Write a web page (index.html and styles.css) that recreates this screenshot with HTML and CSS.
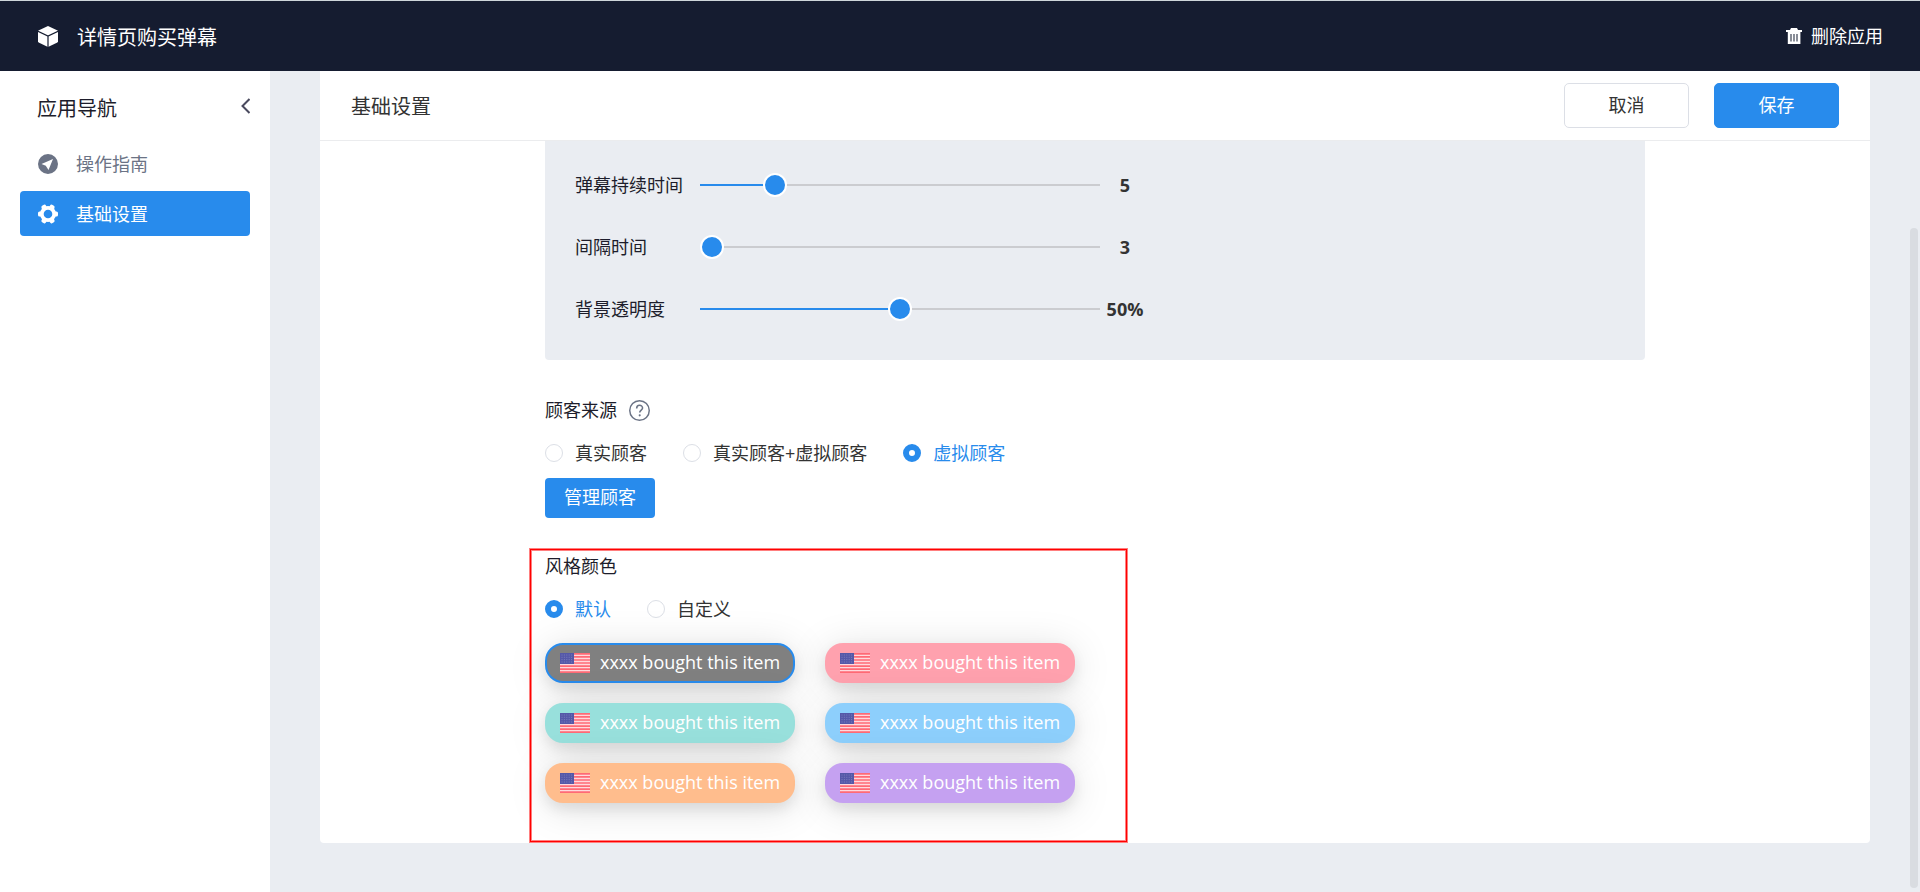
FILE: index.html
```html
<!DOCTYPE html>
<html lang="zh-CN">
<head>
<meta charset="utf-8">
<title>详情页购买弹幕</title>
<link rel="stylesheet" href="styles.css">
</head>
<body>
<svg class="sprite" aria-hidden="true">
  <symbol id="flag" viewBox="0 0 30 20">
    <rect width="30" height="20" fill="#ffd9dd"/>
    <path d="M0 .8h30M0 3.9h30M0 7h30M0 10h30M0 13.1h30M0 16.2h30M0 19.2h30" stroke="#ff6a75" stroke-width="1.7"/>
    <rect width="14" height="11" fill="#5558a8"/>
    <path d="M1.500 2h11M1.500 4.300h11M1.500 6.600h11M1.500 9h11" stroke="#7b7ebc" stroke-width="1" stroke-dasharray="1 1.400"/>
  </symbol>
</svg>
<header class="topbar">
  <svg class="topbar-logo" viewBox="0 0 20 21" aria-hidden="true">
    <path fill="#fff" d="M10 0l9.600 4.500.4 1V15.600l-.6 1L10 21 .6 16.600l-.6-1V5.500l.4-1z"/>
    <path fill="none" stroke="#151c30" stroke-width="1.200" d="M0 5.300l10 4.800 10-4.800M10 10.100V21"/>
  </svg>
  <h1 class="topbar-title">详情页购买弹幕</h1>
  <button class="delete" type="button">
    <svg class="delete-icon" viewBox="0 0 16 16" aria-hidden="true">
      <path fill="#fff" fill-rule="evenodd" d="M5 0h6l1 2h4v2h-1.600v12H1.800V4H0V2h4zM4.500 6v7.500h1V6zM7.500 6v7.500h1V6zM10.500 6v7.500h1V6z"/>
    </svg>
    删除应用
  </button>
</header>
<div class="layout">
  <aside class="sidebar">
    <div class="sidebar-head">
      <h2 class="sidebar-title">应用导航</h2>
      <button class="collapse" type="button" aria-label="收起">
        <svg class="collapse-icon" viewBox="0 0 10 16" aria-hidden="true"><path d="M9.500 1L2.500 8l7 7" fill="none" stroke="#4a4a5e" stroke-width="2"/></svg>
      </button>
    </div>
    <nav class="nav">
      <a class="nav-item" href="#guide">
        <svg class="nav-icon" viewBox="0 0 20 20" aria-hidden="true"><path fill="#6b7385" fill-rule="evenodd" d="M10 0a10 10 0 100 20 10 10 0 000-20zM15 5L3.500 10l4.300 1.700L10.500 16z"/></svg>
        操作指南
      </a>
      <a class="nav-item nav-item-active" href="#settings">
        <svg class="nav-icon" viewBox="0 0 20 20" aria-hidden="true">
          <g fill="#fff">
            <circle cx="10" cy="10" r="8"/>
            <rect x="0" y="7.500" width="20" height="5" rx="1.500"/>
            <rect x="0" y="7.500" width="20" height="5" rx="1.500" transform="rotate(60 10 10)"/>
            <rect x="0" y="7.500" width="20" height="5" rx="1.500" transform="rotate(120 10 10)"/>
          </g>
          <circle cx="10" cy="10" r="4.300" fill="#288bec"/>
        </svg>
        基础设置
      </a>
    </nav>
  </aside>
  <main class="main">
    <section class="card">
      <div class="card-head">
        <h2 class="card-title">基础设置</h2>
        <button class="btn" type="button">取消</button>
        <button class="btn btn-primary" type="button">保存</button>
      </div>
      <form class="form">
        <div class="panel">
          <div class="slider-row">
            <label class="slider-label" for="duration">弹幕持续时间</label>
            <input class="slider" id="duration" type="range" min="3" max="15" value="5" style="--fill: 17%">
            <output class="slider-value" for="duration">5</output>
          </div>
          <div class="slider-row">
            <label class="slider-label" for="interval">间隔时间</label>
            <input class="slider" id="interval" type="range" min="3" max="15" value="3" style="--fill: 0%">
            <output class="slider-value" for="interval">3</output>
          </div>
          <div class="slider-row">
            <label class="slider-label" for="opacity">背景透明度</label>
            <input class="slider" id="opacity" type="range" min="0" max="100" value="50" style="--fill: 50%">
            <output class="slider-value" for="opacity">50%</output>
          </div>
        </div>

        <section class="group group-source">
          <h3 class="group-title">顾客来源
            <svg class="help" viewBox="0 0 20 20" aria-hidden="true"><circle cx="10" cy="10" r="9.300" fill="none" stroke="#6b7385" stroke-width="1.400"/><path d="M7.300 8c0-4 5.600-3.700 5.600-.4 0 2-2.700 2-2.700 4.400" fill="none" stroke="#6b7385" stroke-width="1.500"/><circle cx="10.200" cy="14.600" r="1" fill="#6b7385"/></svg>
          </h3>
          <div class="radios">
            <label class="radio"><input class="radio-input" type="radio" name="source">真实顾客</label>
            <label class="radio"><input class="radio-input" type="radio" name="source">真实顾客+虚拟顾客</label>
            <label class="radio"><input class="radio-input" type="radio" name="source" checked>虚拟顾客</label>
          </div>
          <button class="manage" type="button">管理顾客</button>
        </section>

        <section class="group group-style">
          <h3 class="group-title">风格颜色</h3>
          <div class="radios">
            <label class="radio"><input class="radio-input" type="radio" name="style" checked>默认</label>
            <label class="radio"><input class="radio-input" type="radio" name="style">自定义</label>
          </div>
          <div class="pills">
            <button class="pill pill-black pill-selected" type="button"><svg class="flag" aria-hidden="true"><use href="#flag"/></svg><span class="pill-text">xxxx bought this item</span></button>
            <button class="pill pill-pink" type="button"><svg class="flag" aria-hidden="true"><use href="#flag"/></svg><span class="pill-text">xxxx bought this item</span></button>
            <button class="pill pill-teal" type="button"><svg class="flag" aria-hidden="true"><use href="#flag"/></svg><span class="pill-text">xxxx bought this item</span></button>
            <button class="pill pill-blue" type="button"><svg class="flag" aria-hidden="true"><use href="#flag"/></svg><span class="pill-text">xxxx bought this item</span></button>
            <button class="pill pill-orange" type="button"><svg class="flag" aria-hidden="true"><use href="#flag"/></svg><span class="pill-text">xxxx bought this item</span></button>
            <button class="pill pill-purple" type="button"><svg class="flag" aria-hidden="true"><use href="#flag"/></svg><span class="pill-text">xxxx bought this item</span></button>
          </div>
        </section>
      </form>
    </section>
    <div class="scroll-thumb"></div>
  </main>
</div>
</body>
</html>
```
FILE: styles.css
```css
:root {
  --blue: #288bec;
  --ink: #151c30;
  --bg: #eaedf2;
}

* {
  box-sizing: border-box;
}

body {
  margin: 0;
  min-height: 100vh;
  display: flex;
  flex-direction: column;
  font: 18px/24px "Open Sans", "Noto Sans CJK SC", sans-serif;
  color: #1d1d2b;
  background: var(--bg);
}

h1, h2, h3 {
  margin: 0;
  font-weight: 400;
}

button {
  padding: 0;
  border: 0;
  background: none;
  font: inherit;
  cursor: pointer;
}

.sprite {
  position: absolute;
  width: 0;
  height: 0;
}

.topbar {
  display: flex;
  align-items: center;
  height: 71px;
  padding: 0 37px;
  border-top: 1px solid #ced6da;
  background: var(--ink);
  color: #fff;
}

.topbar-logo {
  width: 20px;
  height: 21px;
  margin: 0 19px 0 1px;
}

.topbar-title {
  padding-top: 3px;
  font-size: 20px;
}

.delete {
  display: flex;
  align-items: center;
  gap: 9px;
  margin-left: auto;
  color: #fff;
}

.delete-icon {
  width: 16px;
  height: 16px;
}

.layout {
  display: flex;
  flex: 1;
}

.sidebar {
  width: 270px;
  flex-shrink: 0;
  padding: 0 20px;
  background: #fff;
}

.sidebar-head {
  display: flex;
  align-items: center;
  justify-content: space-between;
  height: 70px;
  padding-left: 17px;
}

.sidebar-title {
  padding-top: 6px;
  font-size: 20px;
}

.collapse-icon {
  display: block;
  width: 10px;
  height: 16px;
}

.nav {
  display: grid;
  gap: 5px;
}

.nav-item {
  display: flex;
  align-items: center;
  gap: 18px;
  height: 45px;
  padding-left: 18px;
  border-radius: 4px;
  color: #6b7385;
  text-decoration: none;
}

.nav-item-active {
  background: var(--blue);
  color: #fff;
}

.nav-icon {
  width: 20px;
  height: 20px;
}

.main {
  position: relative;
  flex: 1;
  padding: 0 50px 49px;
}

.card {
  border-radius: 0 0 4px 4px;
  background: #fff;
}

.card-head {
  display: flex;
  align-items: center;
  gap: 25px;
  height: 70px;
  padding: 0 31px;
  border-bottom: 1px solid #ebecee;
}

.card-title {
  flex: 1;
  padding-top: 2px;
  font-size: 20px;
  color: #333;
}

.btn {
  width: 125px;
  height: 45px;
  padding-bottom: 2px;
  border: 1px solid #dcdfe6;
  border-radius: 5px;
  background: #fff;
  color: #333;
}

.btn-primary {
  border-color: var(--blue);
  background: var(--blue);
  color: #fff;
}

.form {
  max-width: 1100px;
  margin: 0 auto;
}

.panel {
  padding: 13px 30px 20px;
  border-radius: 0 0 4px 4px;
  background: var(--bg);
}

.slider-row {
  display: flex;
  align-items: center;
  height: 62px;
}

.slider-label {
  width: 125px;
}

.slider {
  width: 400px;
  height: 24px;
  margin: 0;
  appearance: none;
  background:
    linear-gradient(var(--blue), var(--blue)) left center / var(--fill) 2px no-repeat,
    linear-gradient(#cbccd0, #cbccd0) center / 100% 2px no-repeat;
}

.slider::-webkit-slider-thumb {
  appearance: none;
  width: 24px;
  height: 24px;
  border: 2px solid #fff;
  border-radius: 50%;
  background: var(--blue);
}

.slider-value {
  width: 50px;
  font-weight: 700;
  text-align: center;
  color: #333;
}

.group-source {
  padding-top: 38px;
}

.group-style {
  position: relative;
  margin-top: 36px;
  padding-bottom: 40px;
}

.group-style::after {
  content: "";
  position: absolute;
  top: -5px;
  bottom: 1px;
  left: -15px;
  width: 596px;
  max-width: calc(100% + 15px);
  border: 1px solid #f00;
  box-shadow: 0 0 0 1px rgba(255, 0, 0, 0.5), inset 0 0 0 1px rgba(255, 0, 0, 0.5);
  pointer-events: none;
}

.group-style::after {
  width: 595px;
}

.group-title {
  display: flex;
  align-items: center;
  gap: 12px;
  font-size: 18px;
}

.help {
  width: 21px;
  height: 21px;
}

.radios {
  display: flex;
  gap: 36px;
  margin-top: 19px;
}

.radio {
  display: flex;
  align-items: center;
  gap: 12px;
  color: #333;
}

.radio:has(:checked) {
  color: var(--blue);
}

.radio-input {
  appearance: none;
  width: 18px;
  height: 18px;
  margin: 0;
  border: 1px solid #dcdfe6;
  border-radius: 50%;
  background: #fff;
}

.radio-input:checked {
  border: 6px solid var(--blue);
}

.manage {
  display: block;
  height: 40px;
  margin-top: 13px;
  padding: 0 19px 2px;
  border-radius: 4px;
  background: var(--blue);
  color: #fff;
}

.pills {
  display: grid;
  grid-template-columns: 250px 250px;
  gap: 20px 30px;
  margin-top: 22px;
}

.pill {
  display: flex;
  align-items: center;
  gap: 10px;
  height: 40px;
  padding-left: 15px;
  border-radius: 18px;
  box-shadow: 0 6px 14px rgba(0, 0, 0, 0.09), 0 5px 40px rgba(0, 0, 0, 0.13);
  white-space: nowrap;
  color: #fff;
}

.pill-text {
  padding-bottom: 2px;
}

.pill-selected {
  padding-left: 13px;
  border: 2px solid var(--blue);
}

.pill-black { background: #808080; }
.pill-pink { background: #ffa1ae; }
.pill-teal { background: #98e0dc; }
.pill-blue { background: #8dcffc; }
.pill-orange { background: #ffbd8d; }
.pill-purple { background: #c5a1f1; }

.flag {
  width: 30px;
  height: 20px;
}

.scroll-thumb {
  position: absolute;
  top: 157px;
  right: 2px;
  bottom: 4px;
  width: 8px;
  border-radius: 4px;
  background: #d9dce1;
}
```
